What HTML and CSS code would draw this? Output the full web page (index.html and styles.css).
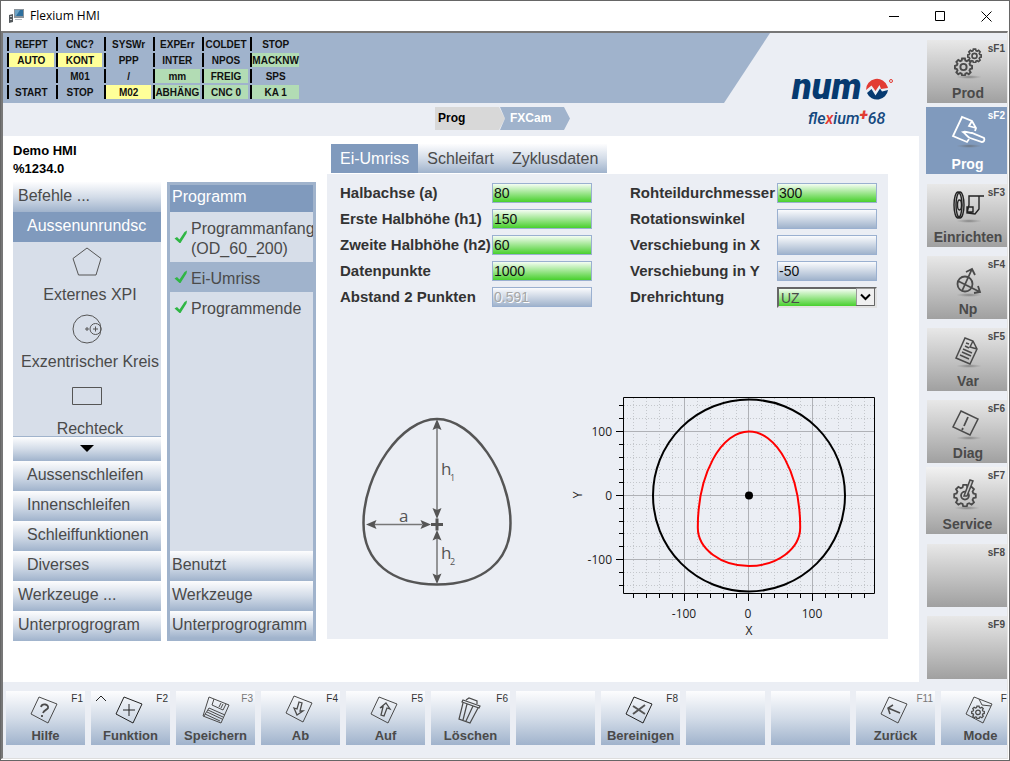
FILE: index.html
```html
<!DOCTYPE html>
<html lang="de">
<head>
<meta charset="utf-8">
<title>Flexium HMI</title>
<link rel="stylesheet" href="styles.css">
</head>
<body>
<svg class="defs" aria-hidden="true">
  <defs>
    <symbol id="tile" viewBox="0 0 40 36"><path d="M13 6L31 13L22 32L5 23Z"/></symbol>
    <symbol id="check" viewBox="0 0 14 14"><path d="M.5 8.500L3 7L5.500 9.500L10.500 2L13 .5L12.500 3.500L6.500 13H5.500Z"/></symbol>
    <radialGradient id="shade"><stop offset="0" stop-color="#555" stop-opacity=".6"/><stop offset="1" stop-color="#777" stop-opacity="0"/></radialGradient>
    <symbol id="gear" viewBox="0 0 20 20"><path d="M8.500 1.500h3l.5 2.200 1.500.7 2-1.200 2 2-1.200 2 .7 1.500 2 .6v2.800l-2 .5-.7 1.500 1.200 2-2 2-2-1.200-1.500.6-.5 2h-3l-.5-2-1.500-.6-2 1.200-2-2 1.200-2-.7-1.500-2-.5V9.300l2-.6.7-1.500-1.200-2 2-2 2 1.200 1.500-.7z"/><circle cx="10" cy="10.500" r="3.300"/></symbol>
  </defs>
</svg>
<div class="window">
  <header class="titlebar">
    <svg class="app-icon" width="16" height="16" viewBox="0 0 16 16" aria-hidden="true"><path d="M5 1h10v9H5z" fill="#8b949c"/><path d="M6 2h8v6H6z" fill="#2d6f9e"/><path d="M6 2h5L7 8H6z" fill="#6da2c4"/><path d="M0 7l4-1v8l-4 1z" fill="#53585c"/><path d="M1 8h2v1H1zM1 11h2v1H1z" fill="#c6cacd"/><path d="M6 11h7v1H6z" fill="#b4b9be"/></svg>
    <span class="title">Flexium HMI</span>
    <button class="wc" aria-label="Minimieren"><svg width="11" height="11" viewBox="0 0 11 11"><path d="M0 5.500h10"/></svg></button>
    <button class="wc" aria-label="Maximieren"><svg width="11" height="11" viewBox="0 0 11 11"><path d="M.5 .5h9v9h-9z"/></svg></button>
    <button class="wc" aria-label="Schließen"><svg width="11" height="11" viewBox="0 0 11 11"><path d="M.5 .5l10 10M10.500 .5l-10 10"/></svg></button>
  </header>

  <div class="app">
    <div class="upper">
      <div class="workspace">
        <div class="head">
          <div class="band">
            <div class="status">
              <span>REFPT</span><span>CNC?</span><span>SYSWr</span><span>EXPErr</span><span>COLDET</span><span>STOP</span>
              <span class="yellow">AUTO</span><span class="yellow">KONT</span><span>PPP</span><span>INTER</span><span>NPOS</span><span class="green">MACKNW</span>
              <span></span><span>M01</span><span>/</span><span class="green">mm</span><span class="green">FREIG</span><span>SPS</span>
              <span>START</span><span>STOP</span><span class="yellow">M02</span><span class="green">ABHÄNG</span><span class="green">CNC 0</span><span class="green">KA 1</span>
            </div>
          </div>
          <nav class="crumbs" aria-label="Pfad"><a href="#prog" class="crumb">Prog</a><a href="#fxcam" class="crumb current">FXCam</a></nav>
          <svg class="logo" width="110" height="60" viewBox="0 0 110 60" role="img" aria-label="num flexium+ 68">
            <text class="logo-num" x="3" y="23">num</text>
            <path d="M77 14A11 11 0 0 1 98.500 10.500L99 12L92 13L90.500 9L86.500 15L82.500 9.500Z" fill="#e23b33"/>
            <path d="M99 14A11 11 0 0 1 78 17L82.500 13L86.500 19.500L91 12.500L93 15.500Z" fill="#063a70"/>
            <circle cx="102" cy="5" r="1.500" fill="none" stroke="#e23b33"/>
            <text class="logo-flex" x="19" y="48">fle<tspan class="red">x</tspan>ium<tspan class="red plus" dy="-4">+</tspan><tspan dy="4">68</tspan></text>
          </svg>
        </div>

        <main class="content">
          <div class="browser">
            <h1 class="program-name">Demo HMI<br>%1234.0</h1>
            <div class="columns">
              <div class="column commands">
                <button class="row">Befehle ...</button>
                <button class="row sub active">Aussenunrundsc</button>
                <div class="shapes">
                  <button class="shape"><svg width="32" height="32" viewBox="0 0 32 32" aria-hidden="true"><path d="M16 2L30 12.500L25 29H7.500L2 12.500Z"/></svg>Externes XPI</button>
                  <button class="shape"><svg width="32" height="32" viewBox="0 0 32 32" aria-hidden="true"><circle cx="16" cy="16" r="14"/><circle cx="24.500" cy="16" r="5.500"/><path d="M14 16h4M16 14v4M22 16h5M24.500 13.500v5"/></svg>Exzentrischer Kreis</button>
                  <button class="shape"><svg width="32" height="32" viewBox="0 0 32 32" aria-hidden="true"><path d="M1.500 7.500h29v17h-29z"/></svg>Rechteck</button>
                </div>
                <button class="scroll" aria-label="Weiter"><svg width="14" height="7" viewBox="0 0 14 7"><path d="M0 0h14L7 7z"/></svg></button>
                <button class="row sub">Aussenschleifen</button>
                <button class="row sub">Innenschleifen</button>
                <button class="row sub">Schleiffunktionen</button>
                <button class="row sub">Diverses</button>
                <button class="row">Werkzeuge ...</button>
                <button class="row">Unterprogrogram</button>
              </div>
              <div class="column program">
                <h2 class="row active">Programm</h2>
                <button class="step two"><svg width="14" height="14" aria-hidden="true"><use href="#check"/></svg><span>Programmanfang (OD_60_200)</span></button>
                <button class="step selected"><svg width="14" height="14" aria-hidden="true"><use href="#check"/></svg><span>Ei-Umriss</span></button>
                <button class="step"><svg width="14" height="14" aria-hidden="true"><use href="#check"/></svg><span>Programmende</span></button>
                <div class="spacer"></div>
                <button class="row">Benutzt</button>
                <button class="row">Werkzeuge</button>
                <button class="row last">Unterprogrogramm</button>
              </div>
            </div>
          </div>

          <section class="editor">
            <div class="tabs" role="tablist">
              <button class="tab active" role="tab" aria-selected="true">Ei-Umriss</button><button class="tab" role="tab">Schleifart</button><button class="tab" role="tab">Zyklusdaten</button>
            </div>
            <div class="panel">
              <form class="fields">
                <label for="a">Halbachse (a)</label><input id="a" class="set" value="80">
                <label for="d" class="second">Rohteildurchmesser</label><input id="d" class="set" value="300">
                <label for="h1">Erste Halbhöhe (h1)</label><input id="h1" class="set" value="150">
                <label for="rot" class="second">Rotationswinkel</label><input id="rot">
                <label for="h2">Zweite Halbhöhe (h2)</label><input id="h2" class="set" value="60">
                <label for="vx" class="second">Verschiebung in X</label><input id="vx">
                <label for="n">Datenpunkte</label><input id="n" class="set" value="1000">
                <label for="vy" class="second">Verschiebung in Y</label><input id="vy" value="-50">
                <label for="dist">Abstand 2 Punkten</label><input id="dist" value="0.591" disabled>
                <label for="dir" class="second">Drehrichtung</label>
                <span class="picker"><select id="dir"><option>UZ</option><option>GUZ</option></select><svg width="19" height="18" viewBox="0 0 19 18" aria-hidden="true"><path d="M.5 .5h18v17H.5z" fill="#f0f0f0" stroke="#999"/><path d="M18.500 0v17.500H0" fill="none" stroke="#666"/><path d="M5 6.500l4.500 4.500L14 6.500" fill="none" stroke="#000" stroke-width="2"/></svg></span>
              </form>
              <div class="figures">
                <svg class="egg" width="220" height="252" viewBox="340 387 220 252" role="img" aria-label="Ei-Umriss mit Massen a, h1 und h2">
                  <path class="outline" d="M437 419C401 419 363.500 474 363.500 523C363.500 562 392 584.500 437 584.500C482 584.500 510.500 562 510.500 523C510.500 474 473 419 437 419Z"/>
                  <path class="dim" d="M437 427v83M437 538v38M374 524.500h48"/>
                  <path class="plus" d="M431 524.500h12M437 518.500v12"/>
                  <path class="head-fill" d="M437 419l-4.500 11 4.500-2 4.500 2zM437 519l-4.500-11 4.500 2 4.500-2zM437 530l-4.500 10.500 4.500-2 4.500 2zM437 584l-4.500-10.500 4.500 2 4.500-2zM366 524.500l10.500-4.500-2 4.500 2 4.500zM431 524.500l-10.500-4.500 2 4.500-2 4.500z"/>
                  <text x="399" y="522">a</text>
                  <text x="441" y="475">h</text><text class="small" x="450" y="481">1</text>
                  <text x="441" y="559">h</text><text class="small" x="450" y="565">2</text>
                </svg>
                <svg class="chart" width="328" height="252" viewBox="560 387 328 252" role="img" aria-label="Vorschau der Kontur">
                  <path class="minor" d="M633.500 398v195M646.500 398v195M659.500 398v195M672.500 398v195M697.500 398v195M710.500 398v195M723.500 398v195M736.500 398v195M761.500 398v195M774.500 398v195M787.500 398v195M800.500 398v195M825.500 398v195M838.500 398v195M851.500 398v195M864.500 398v195M624 405.500h250M624 418.500h250M624 444.500h250M624 457.500h250M624 469.500h250M624 482.500h250M624 508.500h250M624 521.500h250M624 533.500h250M624 546.500h250M624 572.500h250M624 585.500h250"/>
                  <path class="major" d="M684.500 398v195M748.500 398v195M812.500 398v195M624 431.500h250M624 495.500h250M624 559.500h250"/>
                  <path class="axis" d="M623.500 397.500h251v196h-251zM684.500 594v7M748.500 594v7M812.500 594v7M616 431.500h7M616 495.500h7M616 559.500h7M633.500 594v4M646.500 594v4M659.500 594v4M672.500 594v4M697.500 594v4M710.500 594v4M723.500 594v4M736.500 594v4M761.500 594v4M774.500 594v4M787.500 594v4M800.500 594v4M825.500 594v4M838.500 594v4M851.500 594v4M864.500 594v4M619 405.500h4M619 418.500h4M619 444.500h4M619 457.500h4M619 469.500h4M619 482.500h4M619 508.500h4M619 521.500h4M619 533.500h4M619 546.500h4M619 572.500h4M619 585.500h4"/>
                  <circle class="blank" cx="749" cy="495.500" r="96"/>
                  <path class="contour" d="M697.800 527.500A51.200 96 0 0 1 800.200 527.500A51.200 38.500 0 0 1 697.800 527.500Z"/>
                  <circle cx="749" cy="495.500" r="4"/>
                  <g class="end"><text x="612" y="436">100</text><text x="612" y="500">0</text><text x="612" y="564">-100</text></g>
                  <g class="mid"><text x="684" y="618">-100</text><text x="748" y="618">0</text><text x="812" y="618">100</text><text x="749" y="635">X</text><text transform="translate(582 495) rotate(-90)">Y</text></g>
                </svg>
              </div>
            </div>
          </section>
        </main>
      </div>

      <nav class="side" aria-label="Hauptfunktionen">
        <button class="key"><kbd>sF1</kbd><svg class="pic" width="40" height="40" viewBox="0 0 40 40"><ellipse cx="21" cy="34" rx="13" ry="2" fill="url(#shade)"/><use href="#gear" x="6" y="14" width="19" height="19" stroke-width="2"/><use href="#gear" x="19" y="5" width="15" height="15" stroke-width="2.200"/></svg>Prod</button>
        <button class="key large current"><kbd>sF2</kbd><svg class="pic" width="40" height="40" viewBox="0 0 40 40"><ellipse cx="21" cy="32" rx="13" ry="2" fill="url(#shade)"/><path d="M27 17L28 14L24 7L14 3L5 22L19 28L21 25M24 7L21 12L28 14" stroke-width="1.800"/><path d="M15 18C18 17 21 19 24 19L36 24C37 26 36 28 34 28L22 24C19 23 18 20 15 18Z" stroke-width="1.800"/></svg>Prog</button>
        <button class="key"><kbd>sF3</kbd><svg class="pic black" width="40" height="40" viewBox="0 0 40 40"><ellipse cx="21" cy="34" rx="13" ry="2" fill="url(#shade)"/><g stroke-width="1.400"><ellipse cx="10" cy="18" rx="4" ry="13"/><ellipse cx="12" cy="18" rx="4" ry="13"/><ellipse cx="11.500" cy="18" rx="2" ry="5"/><path d="M36 9H21v9l-2 8 8 1 4-5V9M19 20h6v5h-6z"/></g></svg>Einrichten</button>
        <button class="key"><kbd>sF4</kbd><svg class="pic" width="40" height="40" viewBox="0 0 40 40"><ellipse cx="21" cy="36" rx="13" ry="2" fill="url(#shade)"/><g stroke-width="1.800"><circle cx="17" cy="25" r="7.500"/><path d="M10 22L32 33M26 34L32 33L30 27M14 32L24 10M18 13L24 10L27 16"/></g></svg>Np</button>
        <button class="key"><kbd>sF5</kbd><svg class="pic" width="40" height="40" viewBox="0 0 40 40"><ellipse cx="21" cy="35" rx="13" ry="2" fill="url(#shade)"/><path d="M17 7L25 10L29 18L22 33L8 27ZM25 10L22 16L29 18M18 12l3 1M17 15l4 2M15 18l9 4M14 21l9 4M12 24l9 4" stroke-width="1.500"/></svg>Var</button>
        <button class="key"><kbd>sF6</kbd><svg class="pic" width="40" height="40" viewBox="0 0 40 40"><ellipse cx="21" cy="35" rx="13" ry="2" fill="url(#shade)"/><path d="M13 8L30 16L22 32L5 24Z" stroke-width="1.500"/><path d="M20 14l-4 9M15 25l-1 2" stroke-width="1.800"/></svg>Diag</button>
        <button class="key large pale"><kbd>sF7</kbd><svg class="pic" width="40" height="40" viewBox="0 0 40 40"><ellipse cx="19" cy="34" rx="13" ry="2" fill="url(#shade)"/><use href="#gear" x="5" y="9" width="24" height="24" stroke-width="1.500"/><path class="pin" d="M16 22L22 6L25 7L19 22Z" stroke-width="1.500"/></svg>Service</button>
        <button class="key"><kbd>sF8</kbd></button>
        <button class="key"><kbd>sF9</kbd></button>
      </nav>
    </div>

    <footer class="keys">
      <button class="fkey"><kbd>F1</kbd><svg class="pic" width="40" height="36" viewBox="0 0 40 36"><use href="#tile"/><path d="M15 16c1-4 8-3 7 1-1 2-4 2-5 5M16 24v2" stroke-width="1.800"/></svg>Hilfe</button>
      <button class="fkey"><svg class="more" width="12" height="8" viewBox="0 0 12 8"><path d="M1 7l5-5 5 5"/></svg><kbd>F2</kbd><svg class="pic black" width="40" height="36" viewBox="0 0 40 36"><use href="#tile"/><path d="M12 19h12M18 13v12"/></svg>Funktion</button>
      <button class="fkey"><kbd class="dim">F3</kbd><svg class="pic thin" width="40" height="36" viewBox="0 0 40 36"><path d="M13 6L33 14L25 32L7 25ZM18 8l-2 6 11 5 3-6M25 12l-2 4M27 13l-2 4M13 17l16 7M12 19l15 7M11 21l15 7M9 23l15 7M13 17l-5 8"/></svg>Speichern</button>
      <button class="fkey"><kbd>F4</kbd><svg class="pic" width="40" height="36" viewBox="0 0 40 36"><use href="#tile" y="-1"/><path d="M18 11l3 1-2 8h3l-6 4-3-7 3 1z" stroke-width="1.300"/></svg>Ab</button>
      <button class="fkey"><kbd>F5</kbd><svg class="pic" width="40" height="36" viewBox="0 0 40 36"><use href="#tile"/><path d="M20 12l4 6-3-1-3 8-3-1 2-8-3 1z" stroke-width="1.300"/></svg>Auf</button>
      <button class="fkey"><kbd>F6</kbd><svg class="pic thin" width="40" height="36" viewBox="0 0 40 36"><path d="M12 9l17 6-1 2L11 11zM15 9l3-2 8 3v3M12 12L8 28l11 4 8-15M16 13l-4 16M22 15l-7 15" stroke-width="1.200"/></svg>Löschen</button>
      <button class="fkey" aria-label="F7"></button>
      <button class="fkey"><kbd>F8</kbd><svg class="pic black" width="40" height="36" viewBox="0 0 40 36"><use href="#tile"/><path d="M12 15l12 8M24 14l-12 9" stroke="#555" stroke-width="2"/></svg>Bereinigen</button>
      <button class="fkey" aria-label="F9"></button>
      <button class="fkey" aria-label="F10"></button>
      <button class="fkey"><kbd class="dim">F11</kbd><svg class="pic" width="40" height="36" viewBox="0 0 40 36"><use href="#tile"/><path d="M24 22L12 17M17 14l-5 3 2 6" stroke-width="1.500"/></svg>Zurück</button>
      <button class="fkey"><kbd>F12</kbd><svg class="pic" width="40" height="36" viewBox="0 0 40 36"><use href="#tile"/><path d="M18 8l3 6 9 1"/><use href="#gear" x="10" y="14" width="14" height="14" stroke-width="1.800"/></svg>Mode</button>
    </footer>
  </div>
</div>
</body>
</html>
```

FILE: styles.css
```css
* { box-sizing: border-box; }

:root {
  --pale: #ebeef4;
  --list: #d7dee9;
  --mid: #a0b3cc;
  --strong: #809abd;
  --ink: #4a4a4a;
  --fade: linear-gradient(#fdfdfe, #d3dce8 50%, #a0b3cc);
}

body {
  margin: 0;
  font-family: "Liberation Sans", Arial, sans-serif;
  font-size: 16px;
  line-height: 20px;
  color: var(--ink);
}

button {
  font: inherit;
  color: inherit;
  border: 0;
  border-radius: 0;
  margin: 0;
  padding: 0;
  background: none;
}

svg { display: block; flex: none; }
.defs { position: absolute; width: 0; height: 0; }

.window {
  min-height: 100vh;
  display: flex;
  flex-direction: column;
  border: 1px solid #666;
  background: #fff;
}

.titlebar {
  display: flex;
  align-items: center;
  height: 30px;
  padding-left: 8px;
  background: #fff;
}
.title {
  flex: 1;
  margin-left: 5px;
  font: 12px/18px "Open Sans", "Noto Sans", sans-serif;
  color: #000;
}
.wc { width: 46px; height: 30px; display: flex; align-items: center; justify-content: center; }
.wc path { fill: none; stroke: #000; }

.app {
  flex: 1;
  display: flex;
  flex-direction: column;
  margin: 0 1px 1px 0;
  border-top: 2px solid #777;
  border-left: 2px solid #777;
  border-bottom: 1px solid #ddd;
  border-right: 1px solid #e6e6e6;
  background: var(--pale);
  overflow: hidden;
}
.upper { flex: 1; display: flex; }
.workspace { flex: 1; min-width: 0; display: flex; flex-direction: column; }

.head {
  display: grid;
  grid-template: 70px 33px / 1fr 149px;
}
.band {
  background: var(--mid);
  clip-path: polygon(0 0, 100% 0, calc(100% - 46px) 100%, 0 100%);
  padding: 4px;
}
.status {
  display: grid;
  grid-template-columns: repeat(6, 1fr);
  grid-auto-rows: 14px;
  gap: 2px;
  width: 292px;
  font-size: 10px;
  font-weight: bold;
  line-height: 16px;
  text-align: center;
  color: #111;
}
.status span { border-left: 2px solid #000; white-space: nowrap; }
.yellow { background: #ffff99; }
.green { background: #b2dcb4; }

.logo { grid-column: 2; grid-row: 1 / 3; align-self: end; margin: 0 0 0 19px; }
.logo-num { font: italic 900 36px Roboto, sans-serif; fill: #063a70; }
.logo-flex { font: italic 500 16px Roboto, sans-serif; fill: #14487e; }
.red { fill: #e23b33; }
.plus { font-weight: 900; }

.crumbs { grid-column: 1; display: flex; padding: 4px 0 0 432px; }
.crumb {
  height: 23px;
  padding: 0 0 0 3px;
  width: 70px;
  font-size: 12px;
  font-weight: bold;
  line-height: 23px;
  color: #000;
  text-decoration: none;
  background: #d8d8d8;
  clip-path: polygon(0 0, 64px 0, 100% 50%, 64px 100%, 0 100%);
}
.crumb.current {
  margin-left: -5px;
  padding-left: 10px;
  color: #fff;
  background: var(--mid);
  clip-path: polygon(0 0, 64px 0, 100% 50%, 64px 100%, 0 100%, 5px 50%);
}

.content {
  flex: 1;
  display: flex;
  gap: 11px;
  padding: 6px 31px 41px 10px;
  background: #fff;
}
.browser { display: flex; flex-direction: column; }
.program-name {
  margin: 0 0 4px;
  font-size: 13px;
  line-height: 18px;
  color: #000;
}
.columns { flex: 1; display: flex; gap: 6px; }
.column { display: flex; flex-direction: column; }
.commands { width: 148px; }
.row {
  flex: none;
  height: 30px;
  margin: 0;
  padding: 0 5px 2px;
  font-size: 16px;
  font-weight: normal;
  line-height: 28px;
  text-align: left;
  white-space: nowrap;
  overflow: hidden;
  background: var(--fade);
}
.sub { padding-left: 14px; }
.row.active { color: #fff; background: var(--strong); }
.shapes {
  flex: 1 1 0;
  overflow: hidden;
  background: var(--list);
  border-bottom: 1px solid var(--mid);
}
.shape {
  display: flex;
  flex-direction: column;
  align-items: center;
  gap: 7px;
  width: 100%;
  height: 67px;
  padding-top: 4px;
  line-height: 20px;
  white-space: nowrap;
  text-indent: 6px;
}
.shape svg { fill: none; stroke: #555; }
.scroll { height: 24px; display: flex; justify-content: center; padding-top: 8px; background: var(--fade); }

.program {
  width: 149px;
  border: 3px solid var(--mid);
  background: var(--list);
}
.program .row { padding-left: 2px; }
h2.row { height: 27px; line-height: 24px; }
.row.last { height: 27px; }
.step {
  display: flex;
  align-items: center;
  gap: 3px;
  height: 30px;
  padding: 3px 0 0 4px;
  text-align: left;
  overflow: hidden;
}
.step svg { fill: #2fb644; margin-bottom: 4px; }
.step.two { height: 50px; }
.step.selected { background: var(--mid); }
.spacer { flex: 1; }

.editor { flex: 1; display: flex; flex-direction: column; padding: 2px 0; }
.tabs { display: flex; margin-left: 4px; }
.tab { height: 29px; padding: 0 9px; background: var(--fade); }
.tab.active { color: #fff; background: var(--strong); }
.panel {
  flex: 1;
  display: flex;
  flex-direction: column;
  margin-top: 1px;
  padding: 9px 0 0 13px;
  background: var(--pale);
}

.fields {
  display: grid;
  grid-template-columns: 152px 100px 185px 100px;
  grid-auto-rows: 20px;
  row-gap: 6px;
}
.fields label { font-size: 15px; font-weight: bold; color: #333; white-space: nowrap; }
.second { padding-left: 38px; }
.fields input {
  width: 100%;
  height: 20px;
  padding: 0 1px;
  border: 1px solid #9ab0d0;
  border-radius: 0;
  font: 14px "Liberation Sans", Arial, sans-serif;
  color: #111;
  background: linear-gradient(#fafbfd, #a0b3cc);
}
.fields input.set { background: linear-gradient(#f4fdf2, #48d02d); }
.fields input:disabled { color: #a6a6a6; text-shadow: 1px 1px #fff; }
.picker { position: relative; }
.picker select {
  appearance: none;
  display: block;
  width: 100%;
  height: 21px;
  padding: 0 2px;
  border: 2px solid #666;
  border-right-color: #e2e2e2;
  border-bottom-color: #e2e2e2;
  border-radius: 0;
  font: 14px "Liberation Sans", Arial, sans-serif;
  color: var(--ink);
  background: linear-gradient(#f4fdf2, #48d02d);
}
.picker svg { position: absolute; right: 2px; top: 1px; pointer-events: none; }

.figures { display: flex; margin-top: auto; }
.outline { fill: none; stroke: #555; stroke-width: 2.5; }
.egg .dim { fill: none; stroke: #777; stroke-width: 1.5; }
.egg .plus { stroke: #555; stroke-width: 3; }
.head-fill { fill: #555; }
.egg text { font: 17px "Open Sans", "Noto Sans", sans-serif; fill: #555; }
.egg .small { font-size: 9px; }
.chart text { font: 12px "Open Sans", "Noto Sans", sans-serif; fill: #222; }
.minor { fill: none; stroke: #c4c7cc; stroke-dasharray: 1 2; }
.major { fill: none; stroke: #afb1b6; }
.axis { fill: none; stroke: #000; }
.blank { fill: none; stroke: #000; stroke-width: 2; }
.contour { fill: none; stroke: #f00; stroke-width: 2; }
.end { text-anchor: end; }
.mid { text-anchor: middle; }

.side { width: 88px; padding: 7px 0 0 8px; }
.key, .fkey {
  position: relative;
  display: flex;
  flex-direction: column;
  align-items: center;
  justify-content: flex-end;
  font-weight: bold;
  color: var(--ink);
}
.key {
  width: 100%;
  height: 63px;
  margin-bottom: 9px;
  padding-left: 2px;
  font-size: 14px;
  line-height: 20px;
  background: linear-gradient(#e8e8e8, #a0a0a0);
}
.key:last-child { margin-bottom: 0; }
.key.large { width: 81px; height: 67px; margin: -5px 0 10px -1px; }
.key.current { color: #fff; background: var(--strong); }
.key.pale { background: linear-gradient(#f2f2f2, #a0a0a0); }
kbd {
  position: absolute;
  top: 3px;
  right: 2px;
  font: bold 10px/12px "Liberation Sans", Arial, sans-serif;
}
.pic { fill: none; stroke: currentColor; }
.pic ellipse[fill^="url"] { stroke: none; }
.black { color: #222; }
.thin { stroke-width: 1; }
.pin { fill: #ccc; }

.keys {
  display: flex;
  gap: 6px;
  height: 76px;
  padding: 9px 0 0 3px;
  overflow: hidden;
}
.fkey {
  flex: none;
  width: 79px;
  height: 54px;
  font-size: 13px;
  line-height: 18px;
  background: var(--fade);
}
.fkey kbd { top: 2px; font-weight: normal; color: #333; }
.fkey kbd.dim { color: #777; }
.more { position: absolute; left: 4px; top: 3px; fill: none; stroke: #222; }
```
